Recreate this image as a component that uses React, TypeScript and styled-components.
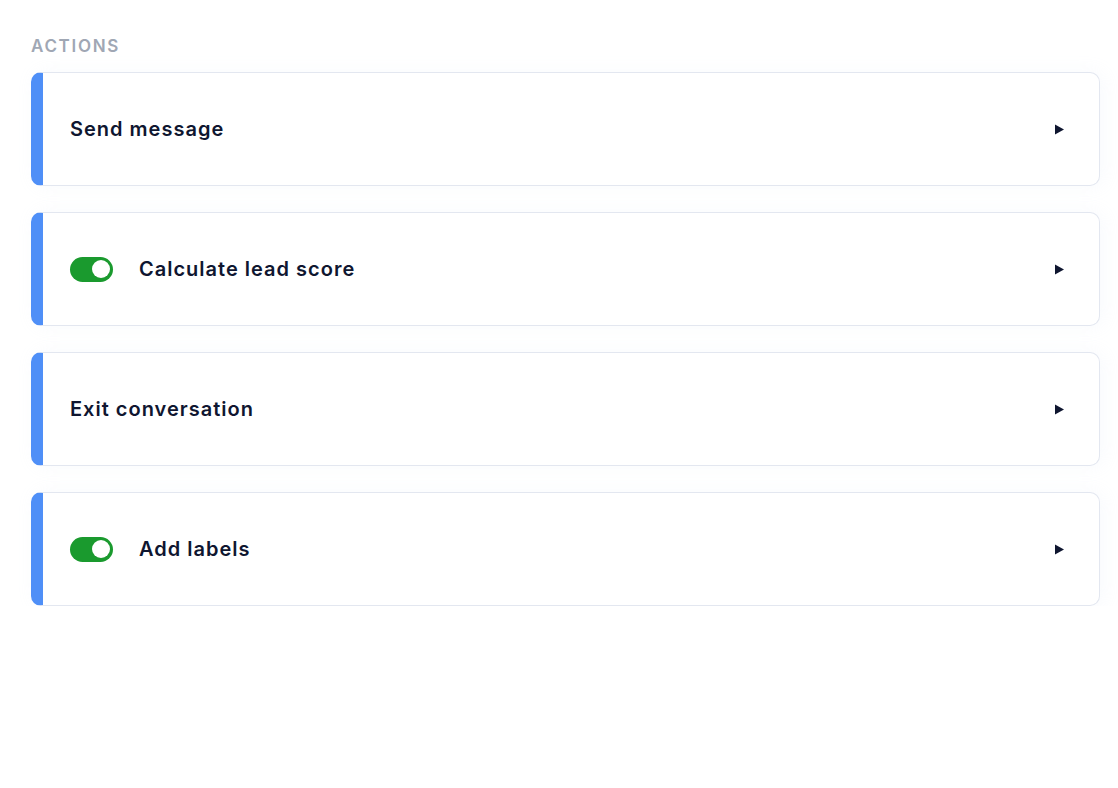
import React from "react";
import styled, { createGlobalStyle } from "styled-components";

interface Action {
  title: string;
  toggle?: boolean;
}

const actions: Action[] = [
  { title: "Send message" },
  { title: "Calculate lead score", toggle: true },
  { title: "Exit conversation" },
  { title: "Add labels", toggle: true },
];

const GlobalStyle = createGlobalStyle`
  body {
    margin: 0;
    background: #ffffff;
    font-family: Inter, "Noto Sans", sans-serif;
  }
`;

const Page = styled.div`
  padding: 36px 18px 0 31px;
`;

const SectionLabel = styled.div`
  font-size: 17px;
  line-height: 21px;
  font-weight: 600;
  letter-spacing: 1.7px;
  color: #a0a7b4;
  text-transform: uppercase;
  margin-bottom: 15px;
`;

const List = styled.div`
  display: flex;
  flex-direction: column;
  gap: 26px;
`;

const Card = styled.div`
  display: flex;
  align-items: center;
  height: 114px;
  box-sizing: border-box;
  border: 1.5px solid #e3e7f0;
  border-left: 12px solid #4f8ff7;
  border-radius: 10px;
  padding: 0 34px 0 27px;
  background: #fff;
  box-shadow: 4px 0 18px rgba(200, 210, 240, 0.12);
`;

const Toggle = styled.div`
  width: 43px;
  height: 25px;
  border-radius: 13px;
  background: #1a9a2e;
  display: flex;
  align-items: center;
  justify-content: flex-end;
  padding: 0 3px;
  box-sizing: border-box;
  margin-right: 26px;
  flex-shrink: 0;
`;

const Knob = styled.div`
  width: 18px;
  height: 18px;
  border-radius: 50%;
  background: #fff;
`;

const Title = styled.span`
  flex: 1;
  font-size: 20px;
  font-weight: 600;
  letter-spacing: 1px;
  color: #0f1630;
`;

const Arrow = () => (
  <svg width="11" height="11" viewBox="0 0 11 11">
    <path d="M1 0.5 L10 5.5 L1 10.5 Z" fill="#0f1630" />
  </svg>
);

const App: React.FC = () => (
  <>
    <GlobalStyle />
    <Page>
      <SectionLabel>Actions</SectionLabel>
      <List>
        {actions.map((a) => (
          <Card key={a.title}>
            {a.toggle && (
              <Toggle>
                <Knob />
              </Toggle>
            )}
            <Title>{a.title}</Title>
            <Arrow />
          </Card>
        ))}
      </List>
    </Page>
  </>
);

export default App;
